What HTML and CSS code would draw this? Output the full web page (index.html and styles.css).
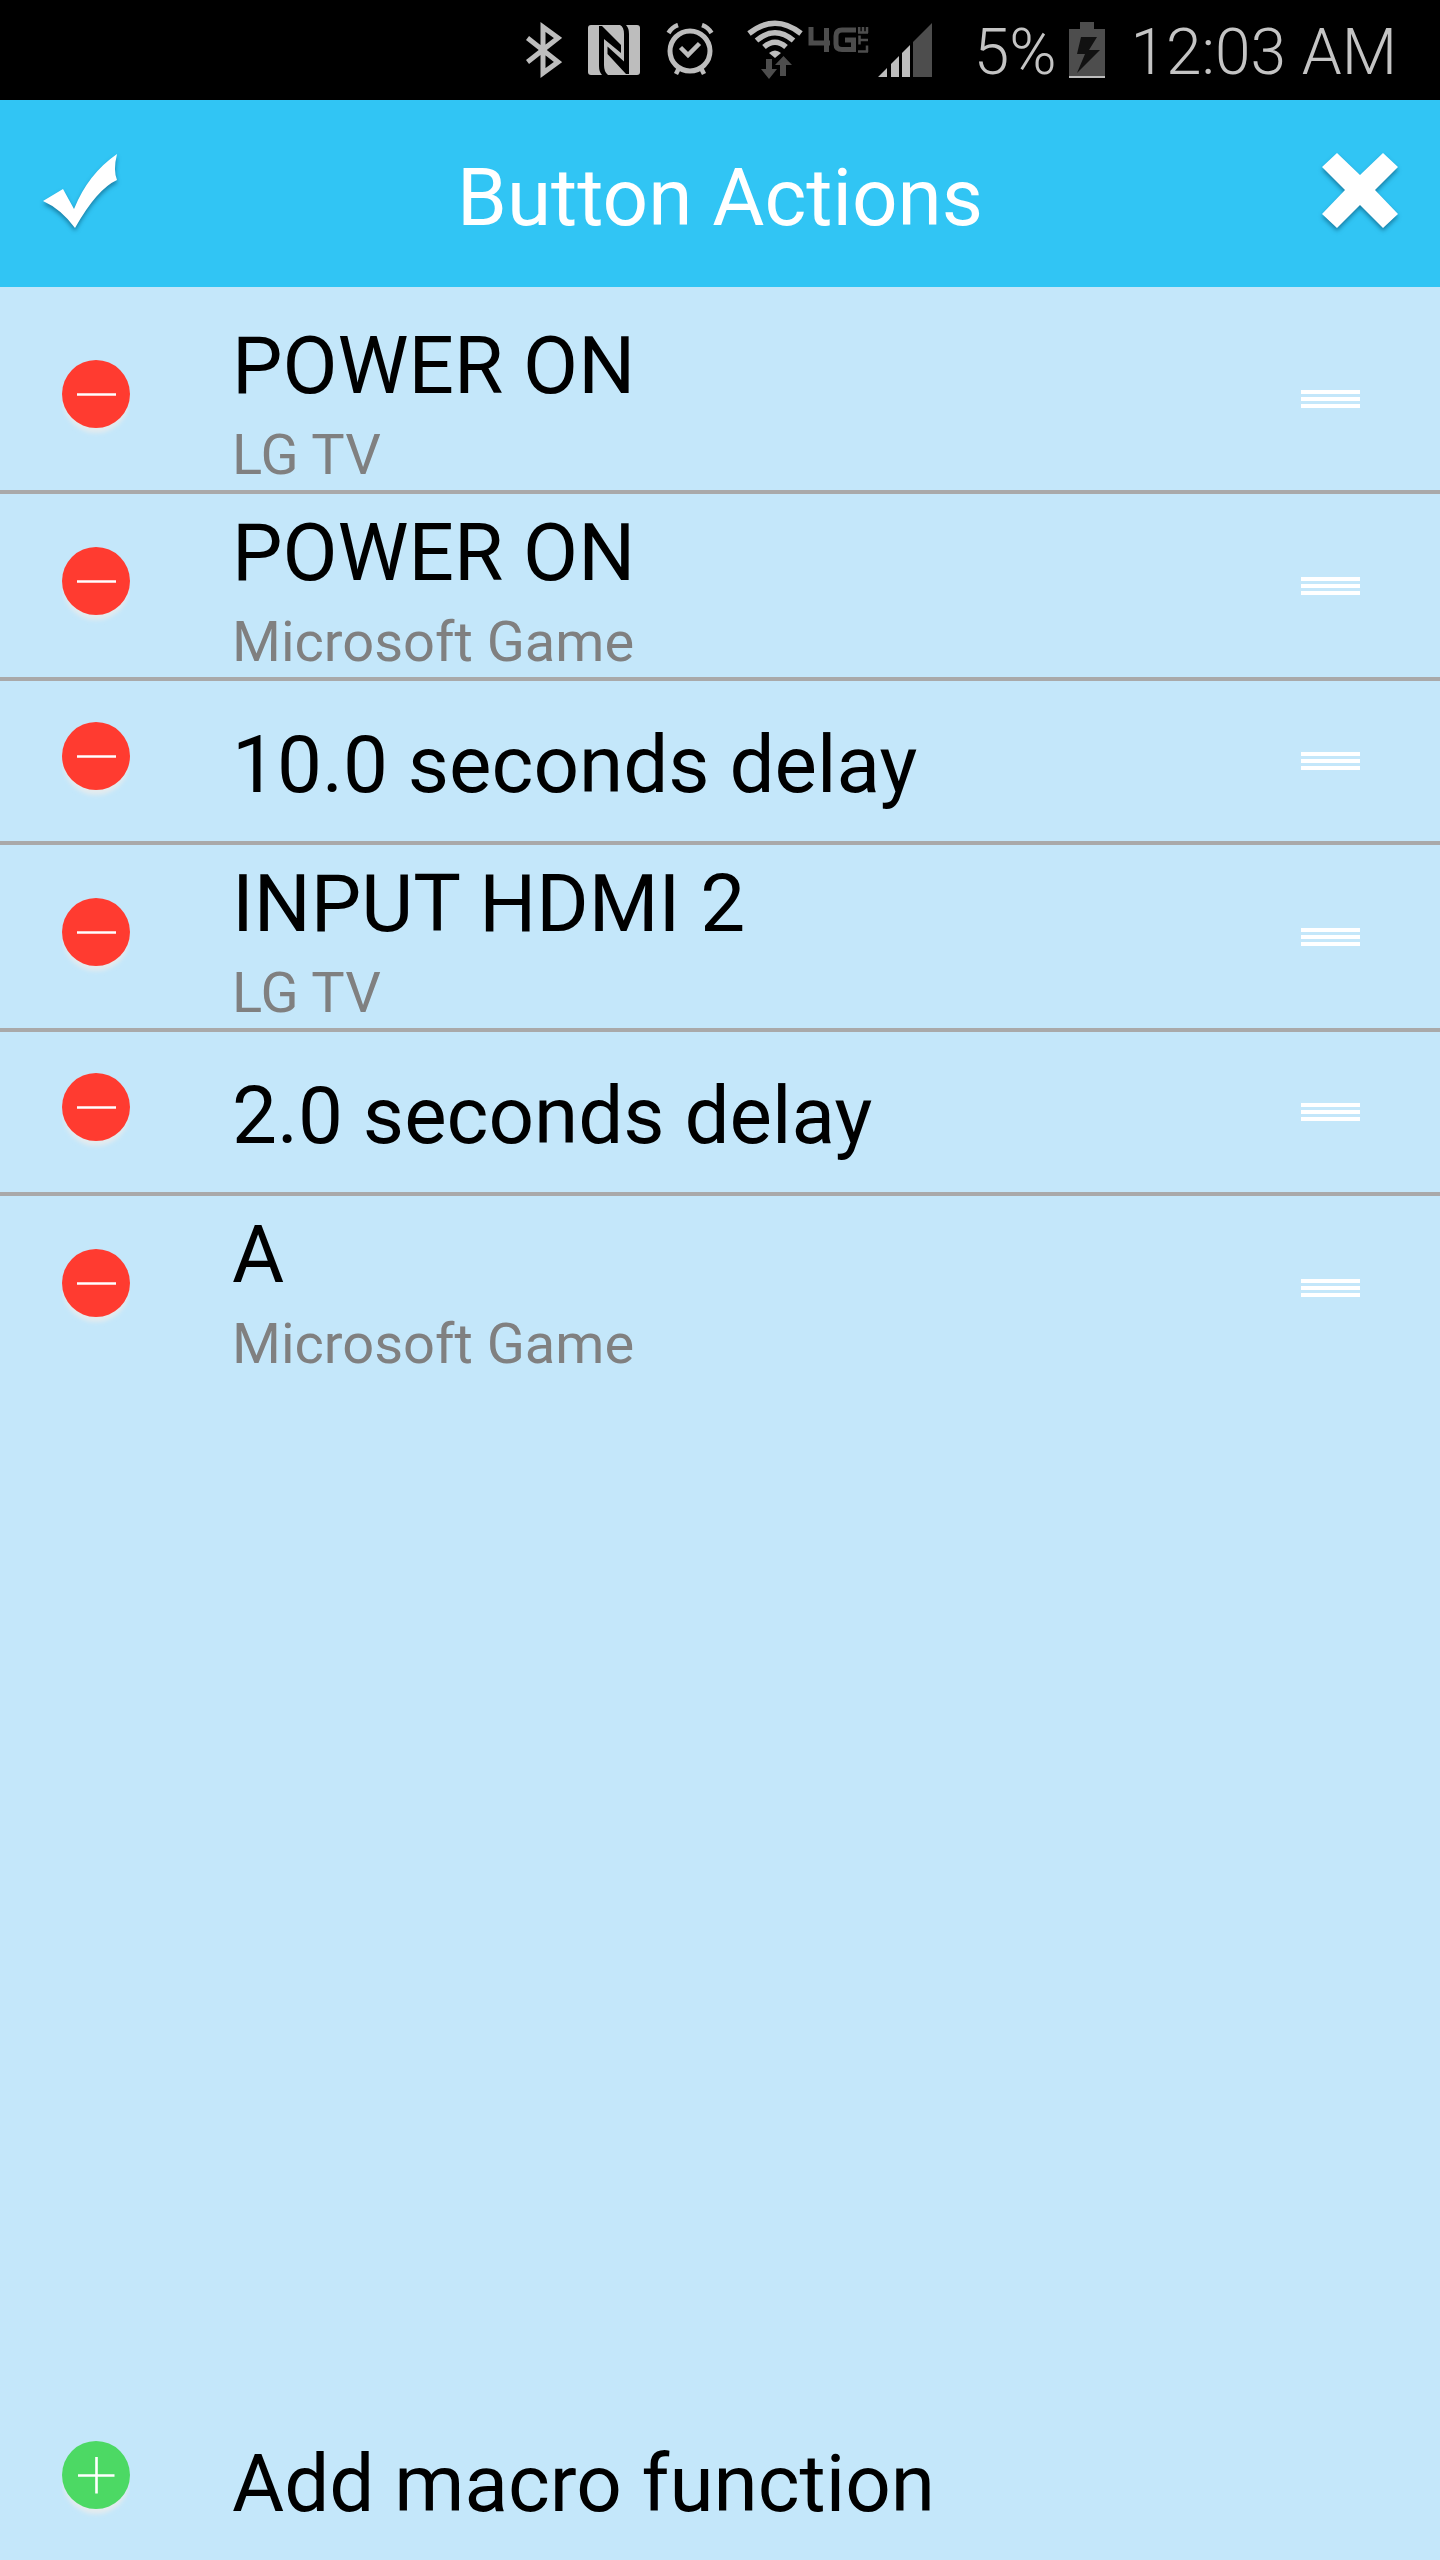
FILE: index.html
```html
<!DOCTYPE html>
<html lang="en">
<head>
<meta charset="utf-8">
<meta name="viewport" content="width=device-width, initial-scale=1">
<title>Button Actions</title>
<link rel="stylesheet" href="styles.css">
</head>
<body>
<svg class="defs" aria-hidden="true">
  <defs>
    <filter id="soft" x="-20%" y="-20%" width="140%" height="140%"><feGaussianBlur stdDeviation="2"/></filter>
    <symbol id="remove" viewBox="0 0 68 78">
      <circle cx="34" cy="40" r="33" fill="#e4ebee" filter="url(#soft)"/>
      <circle cx="34" cy="34" r="34" fill="#ff3b30"/>
      <path d="M15 34.500H54" stroke="#fff" stroke-width="2.600"/>
    </symbol>
    <symbol id="add" viewBox="0 0 68 78">
      <circle cx="34" cy="40" r="33" fill="#e4ebee" filter="url(#soft)"/>
      <circle cx="34" cy="34" r="34" fill="#4cd964"/>
      <path d="M16 34.500H52.500M34.500 16V52.500" stroke="#fff" stroke-width="2.600"/>
    </symbol>
  </defs>
</svg>

<header class="status">
  <svg class="i-bt" viewBox="0 0 36 56" fill="none" stroke="#bdbdbd" stroke-width="5" aria-label="Bluetooth"><path d="M1.500 16L32 40L17 51V5L32 16L1.500 40"/></svg>
  <svg class="i-nfc" viewBox="0 0 52 50" aria-label="NFC"><rect width="52" height="50" rx="3" fill="#bdbdbd"/><path d="M11 1H14L33 20V28L16 14V40Q16 47 20 50H14Q11 47 11 41ZM41 49H38L19.500 29V21.500L36 36.500V9Q36 2 32 0H38Q41 3 41 9Z"/></svg>
  <svg class="i-alarm" viewBox="0 0 48 54" fill="none" stroke="#bdbdbd" aria-label="Alarm"><circle cx="24" cy="28" r="20" stroke-width="5"/><path d="M2.500 10Q6 4 12 2M45.500 10Q42 4 36 2M14.500 24.500L22 32L33.500 20.500M13 45L10 51M35 45L38 51" stroke-width="4.500"/></svg>
  <svg class="i-wifi" viewBox="0 0 56 60" aria-label="Wi-Fi"><g fill="none" stroke="#bdbdbd" stroke-width="5.500"><path d="M2 13.500Q28 -7 54 13.500"/><path d="M9.500 20.500Q28 5 46.500 20.500"/><path d="M17 27Q28 17.500 39 27"/></g><path d="M22 33Q28 28 34 33L28 38Z" fill="#bdbdbd"/><path d="M19 39H25V49H30L22 59L14 49H19ZM33 56H39V45H45L36.500 36L28 45H33Z" fill="#4d4d4d"/></svg>
  <svg class="i-4g" viewBox="0 0 62 28" aria-label="4G LTE" fill="none" stroke="#4d4d4d"><path d="M3 1V17H22M18.500 2V26M48 4H34Q28 4 28 10V18Q28 23.500 34 23.500H45.500V14H37" stroke-width="5"/><path d="M50 25.500H60M59 26V19.500M51.500 9.500V18.500M51.500 14H60M50 6.500H60M51.200 7V1M55 7V1M59 7V1" stroke-width="2.500"/></svg>
  <svg class="i-signal" viewBox="0 0 54 54" aria-label="Signal"><path d="M35 19L54 0V54H35Z" fill="#4d4d4d"/><path d="M0 54L9 45V54ZM13 41L21 33V54H13ZM24 30L32 22V54H24Z" fill="#bdbdbd"/></svg>
  <span class="battery-text">5%</span>
  <svg class="i-battery" viewBox="0 0 36 56" aria-label="Charging"><path d="M11 0H25V7H36V54H0V7H11Z" fill="#4d4d4d"/><path d="M0 54H36V56H0Z" fill="#bdbdbd"/><path d="M12 15H28L20 28H31L8 51L16 32H8Z" fill="#111"/></svg>
  <span class="clock">12:03 AM</span>
</header>

<div class="titlebar">
  <button class="bar-btn" aria-label="Save"><svg viewBox="0 0 78 82"><path d="M2 49L22 37L33 57Q47 22 76 2Q72 18 76 28Q56 37 34 76Q20 57 2 49Z" fill="#fff"/></svg></button>
  <h1>Button Actions</h1>
  <button class="bar-btn" aria-label="Close"><svg viewBox="0 0 78 82"><path d="M16 1L39 23L62 1L77 15L54 38L77 62L62 76L39 53L16 76L1 62L24 38L1 15Z" fill="#fff"/></svg></button>
</div>

<main>
  <ul class="actions">
    <li class="row"><button class="round" aria-label="Remove"><svg><use href="#remove"/></svg></button><div class="text"><div class="name">POWER ON</div><div class="device">LG TV</div></div><button class="grip" aria-label="Reorder"><i></i><i></i><i></i></button></li>
    <li class="row"><button class="round" aria-label="Remove"><svg><use href="#remove"/></svg></button><div class="text"><div class="name">POWER ON</div><div class="device">Microsoft Game</div></div><button class="grip" aria-label="Reorder"><i></i><i></i><i></i></button></li>
    <li class="row single"><button class="round" aria-label="Remove"><svg><use href="#remove"/></svg></button><div class="text"><div class="name">10.0 seconds delay</div></div><button class="grip" aria-label="Reorder"><i></i><i></i><i></i></button></li>
    <li class="row"><button class="round" aria-label="Remove"><svg><use href="#remove"/></svg></button><div class="text"><div class="name">INPUT HDMI 2</div><div class="device">LG TV</div></div><button class="grip" aria-label="Reorder"><i></i><i></i><i></i></button></li>
    <li class="row single"><button class="round" aria-label="Remove"><svg><use href="#remove"/></svg></button><div class="text"><div class="name">2.0 seconds delay</div></div><button class="grip" aria-label="Reorder"><i></i><i></i><i></i></button></li>
    <li class="row"><button class="round" aria-label="Remove"><svg><use href="#remove"/></svg></button><div class="text"><div class="name">A</div><div class="device">Microsoft Game</div></div><button class="grip" aria-label="Reorder"><i></i><i></i><i></i></button></li>
  </ul>
</main>

<footer>
  <button class="row single add"><span class="round"><svg><use href="#add"/></svg></span><span class="name">Add macro function</span></button>
</footer>
</body>
</html>
```
FILE: styles.css
```css
* { box-sizing: border-box; }

body {
  margin: 0;
  min-height: 100vh;
  display: flex;
  flex-direction: column;
  background: #c4e7fa;
  color: #000;
  font-family: Roboto, "Liberation Sans", sans-serif;
}

button {
  padding: 0;
  border: 0;
  background: none;
  color: inherit;
  font: inherit;
  text-align: left;
}

svg { display: block; flex: none; }

.defs { position: absolute; width: 0; height: 0; }

/* Status bar */
.status {
  display: flex;
  justify-content: flex-end;
  align-items: center;
  height: 100px;
  padding-right: 43px;
  background: #000;
  color: #c4c4c4;
  font-size: 64px;
  font-weight: 300;
  line-height: 100px;
  white-space: nowrap;
}

.battery-text, .clock { padding-top: 6px; }
.i-bt { width: 36px; height: 56px; margin-right: 26px; }
.i-nfc { width: 52px; height: 50px; margin-right: 26px; }
.i-alarm { width: 48px; height: 54px; margin-right: 33px; }
.i-wifi { width: 56px; height: 60px; margin-right: 5px; }
.i-4g { width: 62px; height: 28px; margin: 0 8px 20px 0; }
.i-signal { width: 54px; height: 54px; margin-right: 42px; }
.i-battery { width: 36px; height: 56px; margin: 0 26px 0 12px; }

/* Title bar */
.titlebar {
  display: flex;
  justify-content: space-between;
  align-items: center;
  height: 187px;
  padding: 0 41px;
  background: #31c5f4;
  color: #fff;
}

.titlebar h1 {
  margin: 0;
  padding-top: 8px;
  font-size: 80px;
  font-weight: 400;
  line-height: 96px;
}

.bar-btn { padding-bottom: 2px; }

.bar-btn svg {
  width: 78px;
  height: 82px;
  filter: drop-shadow(0 3px 2px rgba(0, 60, 90, 0.5));
}

/* Action list */
main { flex: 1; }

.actions {
  margin: 0;
  padding: 20px 0 0;
  list-style: none;
}

.row {
  display: flex;
  align-items: center;
  width: 100%;
  min-height: 187px;
  padding: 0 80px 0 62px;
  border-bottom: 4px solid #a9a9a9;
}

.row:last-child { border-bottom-color: transparent; }
.row.single { min-height: 164px; }
.row.add { min-height: 160px; border-bottom: 0; }

.round { flex: none; margin-right: 102px; }
.round svg { width: 68px; height: 78px; overflow: visible; }

.text { flex: 1; }
.name { font-size: 80px; line-height: 112px; }
.device { color: #808080; font-size: 56px; line-height: 66px; }

.single .name { padding-top: 8px; }

.grip {
  display: flex;
  flex-direction: column;
  gap: 3px;
  width: 59px;
}

.grip i { height: 4px; background: #fff; }
```
